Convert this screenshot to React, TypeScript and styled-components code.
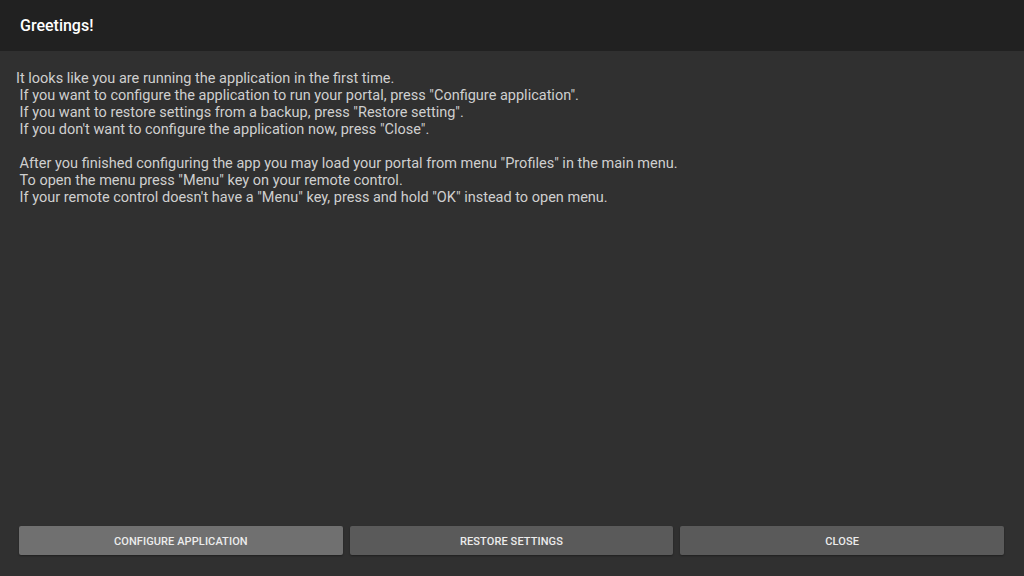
import styled, { createGlobalStyle } from "styled-components";

const GlobalStyle = createGlobalStyle`
  html, body {
    margin: 0;
    padding: 0;
    height: 100%;
    background: #303030;
  }
  #root {
    height: 100%;
  }
`;

const message = `It looks like you are running the application in the first time.
 If you want to configure the application to run your portal, press "Configure application".
 If you want to restore settings from a backup, press "Restore setting".
 If you don't want to configure the application now, press "Close".

 After you finished configuring the app you may load your portal from menu "Profiles" in the main menu.
 To open the menu press "Menu" key on your remote control.
 If your remote control doesn't have a "Menu" key, press and hold "OK" instead to open menu.`;

export default function App() {
  return (
    <>
      <GlobalStyle />
      <Screen>
        <Header>
          <Title>Greetings!</Title>
        </Header>
        <Body>{message}</Body>
        <ButtonRow>
          <ActionButton $focused>Configure application</ActionButton>
          <ActionButton>Restore settings</ActionButton>
          <ActionButton>Close</ActionButton>
        </ButtonRow>
      </Screen>
    </>
  );
}

const Screen = styled.div`
  display: flex;
  flex-direction: column;
  width: 1024px;
  height: 576px;
  background: #303030;
  font-family: Roboto, "Liberation Sans", sans-serif;
`;

const Header = styled.div`
  display: flex;
  align-items: center;
  height: 51px;
  padding: 0 20px;
  background: #212121;
  box-sizing: border-box;
`;

const Title = styled.h1`
  margin: 0;
  font-size: 16px;
  font-weight: 500;
  color: #ffffff;
`;

const Body = styled.div`
  flex: 1;
  padding: 19px 16px 0;
  white-space: pre-wrap;
  font-size: 14.5px;
  line-height: 17px;
  color: #cfcfcf;
`;

const ButtonRow = styled.div`
  display: grid;
  grid-template-columns: repeat(3, 1fr);
  gap: 7px;
  padding: 0 20px 21px 19px;
`;

const ActionButton = styled.button<{ $focused?: boolean }>`
  height: 29px;
  padding-top: 2px;
  border: none;
  border-radius: 2px;
  background: ${(p) => (p.$focused ? "#707070" : "#5a5a5a")};
  box-shadow: 0 1px 2px rgba(0, 0, 0, 0.35);
  color: #ececec;
  font-family: Roboto, "Liberation Sans", sans-serif;
  font-size: 11px;
  font-weight: 500;
  text-transform: uppercase;
  letter-spacing: 0.1px;
  cursor: pointer;
`;
